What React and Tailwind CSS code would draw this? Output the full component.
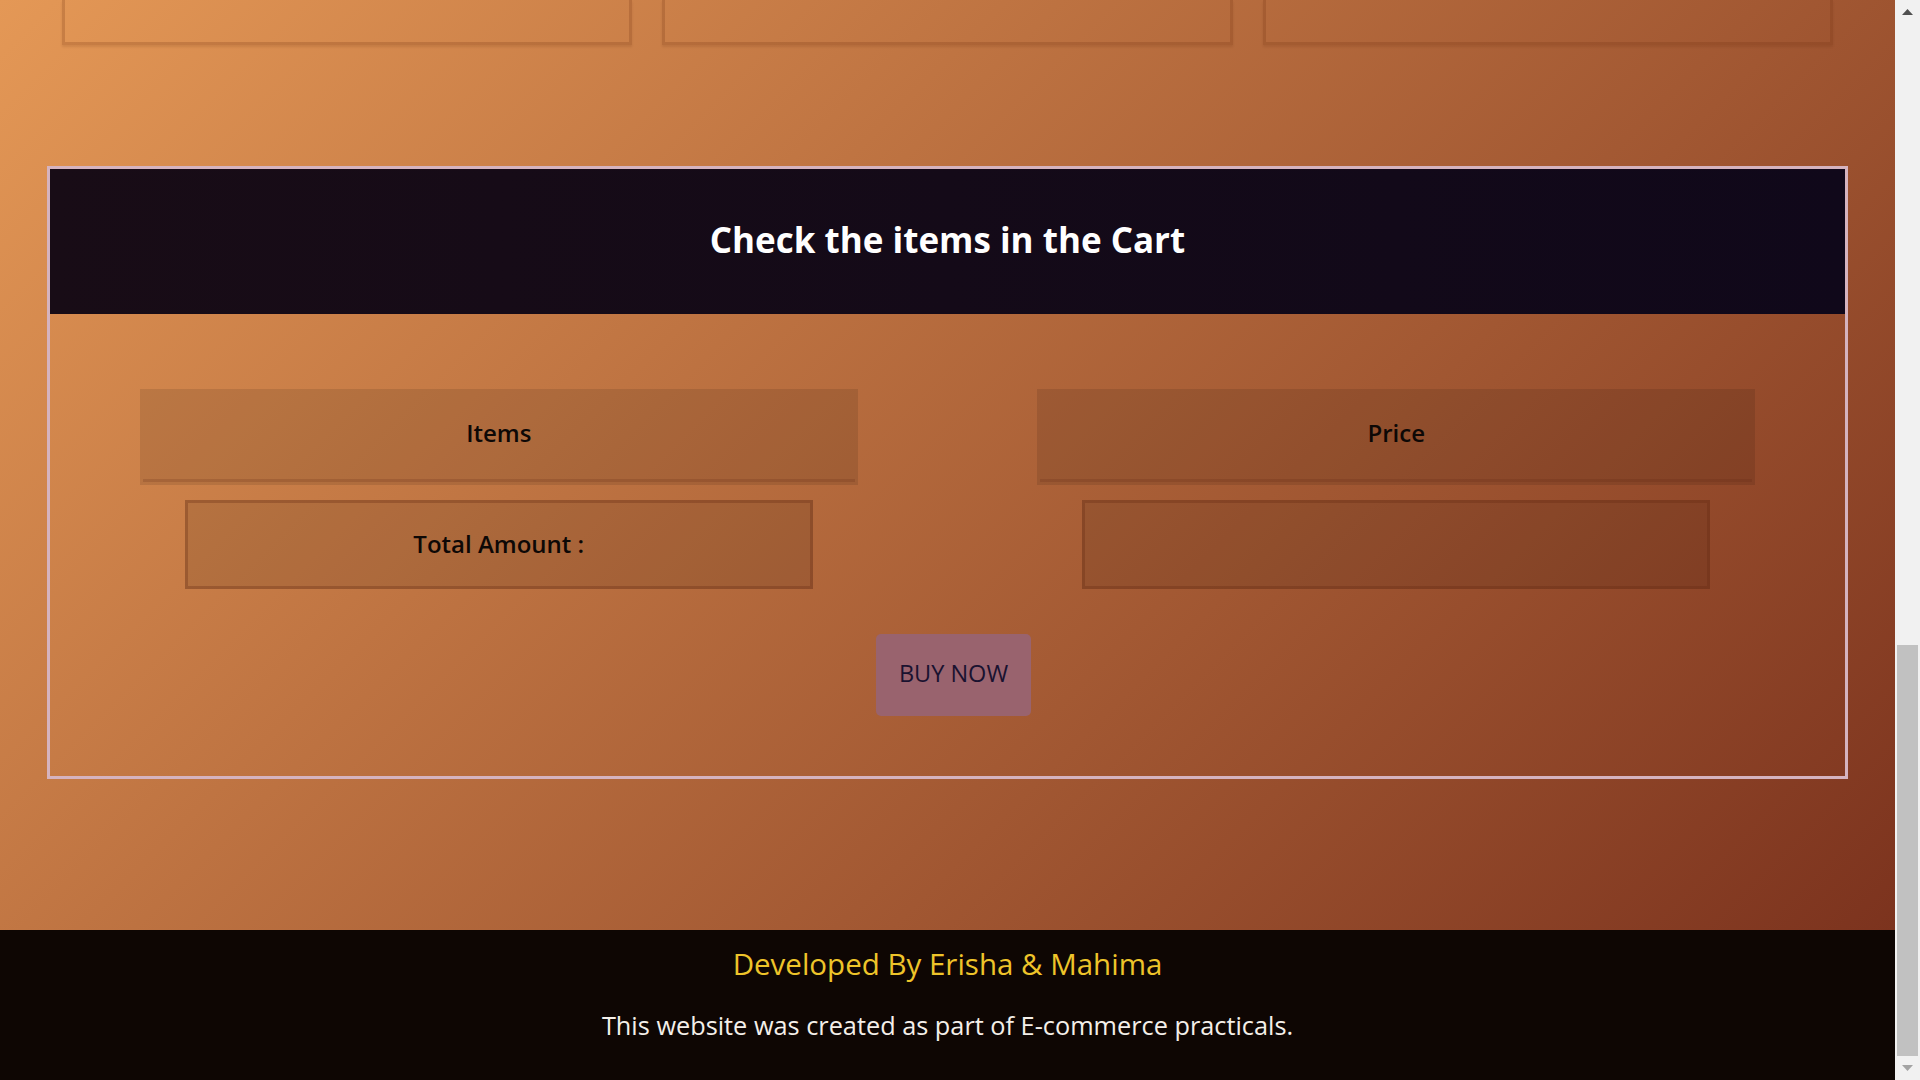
import React from 'react';

const productSlots = [1, 2, 3];

function ScrollTrack() {
  return (
    <div className="flex h-full w-[25px] shrink-0 flex-col bg-[#f1f1f1]">
      <div className="flex h-[24px] items-center justify-center">
        <svg width="11" height="6" viewBox="0 0 11 6" aria-hidden="true">
          <path d="M0 6 L5.5 0 L11 6 Z" fill="#505050" />
        </svg>
      </div>
      <div className="flex flex-1 flex-col justify-end px-[2px]">
        <div className="h-[411px] bg-[#c1c1c1]" />
      </div>
      <div className="flex h-[24px] items-center justify-center">
        <svg width="11" height="6" viewBox="0 0 11 6" aria-hidden="true">
          <path d="M0 0 L5.5 6 L11 0 Z" fill="#a3a3a3" />
        </svg>
      </div>
    </div>
  );
}

function HeadCell({ label }) {
  return (
    <div className="mx-auto w-[80%] bg-black/10 px-[3px] pb-[3px]">
      <div className="flex h-[93px] items-center justify-center border-b-[3px] border-[rgba(90,35,15,0.18)] pb-[2px] text-[24px] font-semibold text-[#0d0806]">
        {label}
      </div>
    </div>
  );
}

function ValueCell({ label }) {
  return (
    <div className="mx-auto mt-[15px] flex h-[89px] w-[70%] items-center justify-center border-[3px] border-[rgba(100,40,15,0.3)] bg-black/10 pb-[2px] text-[24px] font-semibold text-[#0d0806]">
      {label}
    </div>
  );
}

export default function App() {
  return (
    <div className="flex h-[1080px] w-full overflow-hidden font-['Open_Sans',sans-serif]">
      <div className="flex min-w-0 flex-1 flex-col">
        <main className="h-[930px] bg-[linear-gradient(135deg,#e49856,#7c331e)]">
          <div className="grid grid-cols-3 gap-[30px] px-[62px]">
            {productSlots.map((n) => (
              <div
                key={n}
                className="h-[45px] border-[3px] border-t-0 border-[rgba(110,45,15,0.22)] shadow-[0_2px_2px_rgba(80,30,10,0.12)]"
              />
            ))}
          </div>

          <section className="mx-[47px] mt-[121px] border-[3px] border-[#d5b3bf]">
            <div className="flex h-[145px] items-center justify-center bg-[linear-gradient(90deg,#180c16,#10081a)] pb-[3px]">
              <h2 className="text-[35px] font-bold text-white">Check the items in the Cart</h2>
            </div>

            <div className="pb-[60px] pt-[75px]">
              <div className="grid grid-cols-2">
                <div>
                  <HeadCell label="Items" />
                  <ValueCell label="Total Amount :" />
                </div>
                <div>
                  <HeadCell label="Price" />
                  <ValueCell label="" />
                </div>
              </div>

              <div className="mt-[45px] flex justify-center pl-[12px]">
                <button
                  type="button"
                  className="h-[82px] w-[155px] rounded-[5px] bg-[#99636e] pb-[3px] text-[23.5px] text-[#1a1230]"
                >
                  BUY NOW
                </button>
              </div>
            </div>
          </section>
        </main>

        <footer className="flex-1 bg-[#0e0603] pt-[14px] text-center">
          <h3 className="text-[29.5px] leading-[40px] text-[#eec42a]">Developed By Erisha &amp; Mahima</h3>
          <p className="mt-[24px] text-[25.3px] leading-[34px] text-[#f4efe9]">
            This website was created as part of E-commerce practicals.
          </p>
        </footer>
      </div>
      <ScrollTrack />
    </div>
  );
}
